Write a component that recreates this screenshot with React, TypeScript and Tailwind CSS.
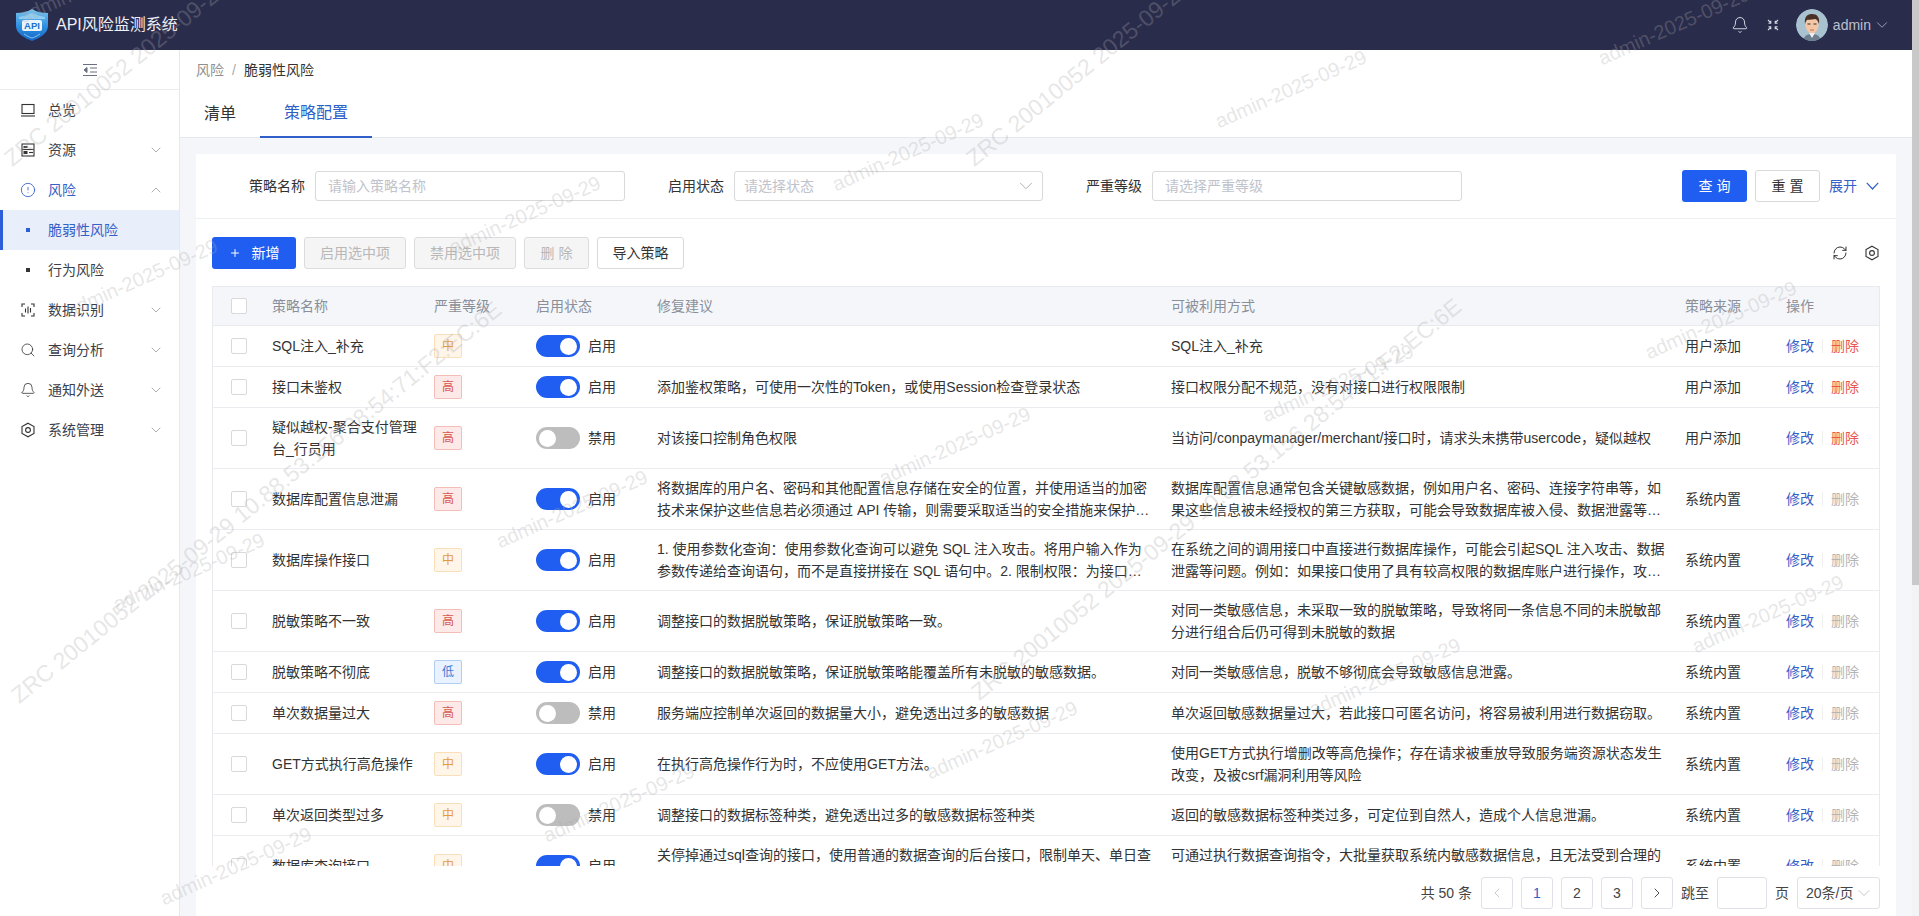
import { Bell, ChevronDown, ChevronLeft, ChevronRight, ChevronUp, CircleAlert, Plus, RefreshCw, Search } from "lucide-react";

type Level = "高" | "中" | "低";

type Rule = {
  name: string;
  level: Level;
  on: boolean;
  fix: string;
  use: string;
  source: "用户添加" | "系统内置";
};

const rules: Rule[] = [
  { name: "SQL注入_补充", level: "中", on: true, fix: "", use: "SQL注入_补充", source: "用户添加" },
  { name: "接口未鉴权", level: "高", on: true, fix: "添加鉴权策略，可使用一次性的Token，或使用Session检查登录状态", use: "接口权限分配不规范，没有对接口进行权限限制", source: "用户添加" },
  { name: "疑似越权-聚合支付管理台_行员用", level: "高", on: false, fix: "对该接口控制角色权限", use: "当访问/conpaymanager/merchant/接口时，请求头未携带usercode，疑似越权", source: "用户添加" },
  { name: "数据库配置信息泄漏", level: "高", on: true, fix: "将数据库的用户名、密码和其他配置信息存储在安全的位置，并使用适当的加密技术来保护这些信息若必须通过 API 传输，则需要采取适当的安全措施来保护数据的机密性和完整性。", use: "数据库配置信息通常包含关键敏感数据，例如用户名、密码、连接字符串等，如果这些信息被未经授权的第三方获取，可能会导致数据库被入侵、数据泄露等严重后果。", source: "系统内置" },
  { name: "数据库操作接口", level: "中", on: true, fix: "1. 使用参数化查询：使用参数化查询可以避免 SQL 注入攻击。将用户输入作为参数传递给查询语句，而不是直接拼接在 SQL 语句中。2. 限制权限：为接口分配最小权限的数据库账户。", use: "在系统之间的调用接口中直接进行数据库操作，可能会引起SQL 注入攻击、数据泄露等问题。例如：如果接口使用了具有较高权限的数据库账户进行操作，攻击者可能会借此获取更多数据。", source: "系统内置" },
  { name: "脱敏策略不一致", level: "高", on: true, fix: "调整接口的数据脱敏策略，保证脱敏策略一致。", use: "对同一类敏感信息，未采取一致的脱敏策略，导致将同一条信息不同的未脱敏部分进行组合后仍可得到未脱敏的数据", source: "系统内置" },
  { name: "脱敏策略不彻底", level: "低", on: true, fix: "调整接口的数据脱敏策略，保证脱敏策略能覆盖所有未脱敏的敏感数据。", use: "对同一类敏感信息，脱敏不够彻底会导致敏感信息泄露。", source: "系统内置" },
  { name: "单次数据量过大", level: "高", on: false, fix: "服务端应控制单次返回的数据量大小，避免透出过多的敏感数据", use: "单次返回敏感数据量过大，若此接口可匿名访问，将容易被利用进行数据窃取。", source: "系统内置" },
  { name: "GET方式执行高危操作", level: "中", on: true, fix: "在执行高危操作行为时，不应使用GET方法。", use: "使用GET方式执行增删改等高危操作；存在请求被重放导致服务端资源状态发生改变，及被csrf漏洞利用等风险", source: "系统内置" },
  { name: "单次返回类型过多", level: "中", on: false, fix: "调整接口的数据标签种类，避免透出过多的敏感数据标签种类", use: "返回的敏感数据标签种类过多，可定位到自然人，造成个人信息泄漏。", source: "系统内置" },
  { name: "数据库查询接口", level: "中", on: true, fix: "关停掉通过sql查询的接口，使用普通的数据查询的后台接口，限制单天、单日查询次数与数据量。", use: "可通过执行数据查询指令，大批量获取系统内敏感数据信息，且无法受到合理的访问控制与审计。", source: "系统内置" },
];

const levelStyle: Record<Level, string> = {
  高: "bg-[#fde9e7] border-[#f5bdb8] text-[#d9574e]",
  中: "bg-[#fff5e8] border-[#f9dfba] text-[#e79a3c]",
  低: "bg-[#e9f2fe] border-[#b0cdf3] text-[#3d7ad6]",
};

function LogoMark() {
  return (
    <svg width="32" height="32" viewBox="0 0 32 32">
      <defs>
        <linearGradient id="shield" x1="0" y1="0" x2="0" y2="1">
          <stop offset="0" stopColor="#7cc4ee" />
          <stop offset="0.55" stopColor="#2d8fe0" />
          <stop offset="1" stopColor="#1666c8" />
        </linearGradient>
      </defs>
      <path d="M16 0 C21 3 26 4 32 4 V17 C32 24 24 29 16 32 C8 29 0 24 0 17 V4 C6 4 11 3 16 0Z" fill="url(#shield)" />
      <path d="M3 8 C8 7 12 6 16 4 C20 6 24 7 29 8 V10 H3Z" fill="#a9dcf7" opacity="0.7" />
      <rect x="6" y="11" width="20" height="11" rx="2" fill="#e8f5fd" />
      <text x="16" y="20" textAnchor="middle" fontSize="9.5" fontWeight="700" fill="#1a6fd0" fontFamily="Liberation Sans, sans-serif">API</text>
      <path d="M8 25 C11 27 13 28 16 29 C19 28 21 27 24 25" stroke="#7cc4ee" fill="none" strokeWidth="1" />
    </svg>
  );
}

function Avatar() {
  return (
    <svg width="32" height="32" viewBox="0 0 32 32" className="rounded-full">
      <circle cx="16" cy="16" r="16" fill="#a8c2cf" />
      <path d="M7 32 C8 26 12 25 16 25 C20 25 24 26 25 32Z" fill="#6d7f8f" />
      <path d="M13 24 H19 L16 29Z" fill="#eef2f4" />
      <ellipse cx="16" cy="16" rx="6.5" ry="8.5" fill="#f3c7a6" />
      <path d="M9 15 C8 7 12 5 16 5 C21 5 24 8 23 15 C22 12 21 10.5 19 10 C16 11 12 10.5 11 11 C10 12 9.5 13 9 15Z" fill="#4a3128" />
      <rect x="11.5" y="14.5" width="3" height="1" fill="#3a2a24" />
      <rect x="17.5" y="14.5" width="3" height="1" fill="#3a2a24" />
      <path d="M14 21 H18" stroke="#c96a5c" strokeWidth="1" />
    </svg>
  );
}

function CollapseIcon() {
  return (
    <svg width="16" height="14" viewBox="0 0 16 14" fill="none" stroke="#6b7080" strokeWidth="1">
      <path d="M1 1.5H15M8 5H15M8 9H15M1 12.5H15" />
      <path d="M5 4.5 L2 7 L5 9.5Z" fill="#6b7080" />
    </svg>
  );
}

function MonitorIcon() {
  return (
    <svg width="16" height="16" viewBox="0 0 16 16" fill="none" stroke="#333" strokeWidth="1.1">
      <rect x="2" y="2.5" width="12" height="9" />
      <path d="M1 14H15" />
    </svg>
  );
}

function AssetIcon() {
  return (
    <svg width="16" height="16" viewBox="0 0 16 16" fill="none" stroke="#333" strokeWidth="1.1">
      <rect x="2" y="2" width="12" height="12" />
      <path d="M2 7.5H14" />
      <rect x="3.5" y="9" width="4" height="3" fill="#333" stroke="none" />
      <rect x="3.5" y="4" width="4" height="2" fill="#333" stroke="none" />
      <path d="M9 10.5H13" />
    </svg>
  );
}

function ScanIcon() {
  return (
    <svg width="16" height="16" viewBox="0 0 16 16" fill="none" stroke="#333" strokeWidth="1.1">
      <path d="M2 5V2H5M11 2H14V5M14 11V14H11M5 14H2V11" />
      <path d="M5.5 6.5V10.5M8 4.5V11.5M10.5 6V10.5" />
    </svg>
  );
}

function HexIcon({ size = 16, color = "#333" }: { size?: number; color?: string }) {
  return (
    <svg width={size} height={size} viewBox="0 0 16 16" fill="none" stroke={color} strokeWidth="1.1">
      <path d="M8 1.2 L14 4.6 V11.4 L8 14.8 L2 11.4 V4.6Z" />
      <circle cx="8" cy="8" r="2.4" />
    </svg>
  );
}

function ShrinkIcon() {
  return (
    <svg width="14" height="14" viewBox="0 0 14 14" fill="none" stroke="#d6d8e2" strokeWidth="1.1">
      <path d="M2 2L5 5M4.8 2.8V5.2H2.4M12 2L9 5M9.2 2.8V5.2H11.6M2 12L5 9M4.8 11.2V8.8H2.4M12 12L9 9M9.2 11.2V8.8H11.6" />
    </svg>
  );
}

function ExpandChevron() {
  return (
    <svg width="13" height="8" viewBox="0 0 13 8" fill="none" stroke="currentColor" strokeWidth="1.2">
      <path d="M0.8 0.8L6.5 7L12.2 0.8" />
    </svg>
  );
}

function SideItem({
  icon,
  label,
  arrow,
  active,
}: {
  icon: React.ReactNode;
  label: string;
  arrow?: "up" | "down";
  active?: boolean;
}) {
  return (
    <div className={`flex h-10 items-center pl-[20px] pr-[15px] text-sm ${active ? "text-[#3560c8]" : "text-[#3b3f4c]"}`}>
      <span className="flex w-[28px] shrink-0">{icon}</span>
      <span className="flex-1">{label}</span>
      {arrow === "down" && <ChevronDown size={16} strokeWidth={1} className="text-[#888]" />}
      {arrow === "up" && <ChevronUp size={16} strokeWidth={1} className="text-[#888]" />}
    </div>
  );
}

function SubItem({ label, active }: { label: string; active?: boolean }) {
  return (
    <div className={`flex h-10 items-center border-l-[3px] pl-[23px] text-sm ${active ? "border-[#2b5fd9] bg-[#e9eefb] text-[#3560c8]" : "border-transparent text-[#3b3f4c]"}`}>
      <span className={`mr-[18px] size-[4px] ${active ? "bg-[#2b5fd9]" : "bg-[#333]"}`} />
      {label}
    </div>
  );
}

function Sidebar() {
  return (
    <aside className="w-[180px] shrink-0 border-r border-[#e6e8ee] bg-white">
      <div className="flex h-[40px] items-center justify-center border-b border-[#ecedf1]">
        <CollapseIcon />
      </div>
      <SideItem icon={<MonitorIcon />} label="总览" />
      <SideItem icon={<AssetIcon />} label="资源" arrow="down" />
      <SideItem icon={<CircleAlert size={16} strokeWidth={1.3} />} label="风险" arrow="up" active />
      <SubItem label="脆弱性风险" active />
      <SubItem label="行为风险" />
      <SideItem icon={<ScanIcon />} label="数据识别" arrow="down" />
      <SideItem icon={<Search size={16} strokeWidth={1.2} color="#333" />} label="查询分析" arrow="down" />
      <SideItem icon={<Bell size={16} strokeWidth={1.2} color="#333" />} label="通知外送" arrow="down" />
      <SideItem icon={<HexIcon />} label="系统管理" arrow="down" />
    </aside>
  );
}

function Filters() {
  return (
    <div className="flex h-[65px] items-center border-b border-[#eeeff2] pl-[53px] pr-[17px] text-sm text-[#333]">
      <span>策略名称</span>
      <div className="ml-[10px] flex h-[30px] w-[310px] items-center rounded-[3px] border border-[#d9d9d9] pl-[12px] text-[#bfc3cc]">请输入策略名称</div>
      <span className="ml-[43px]">启用状态</span>
      <div className="ml-[10px] flex h-[30px] w-[309px] items-center justify-between rounded-[3px] border border-[#d9d9d9] pl-[9px] pr-[5px] text-[#bfc3cc]">
        请选择状态
        <ChevronDown size={22} strokeWidth={1} className="text-[#aaa]" />
      </div>
      <span className="ml-[43px]">严重等级</span>
      <div className="ml-[10px] flex h-[30px] w-[310px] items-center rounded-[3px] border border-[#d9d9d9] pl-[12px] text-[#bfc3cc]">请选择严重等级</div>
      <button className="ml-auto h-[32px] w-[65px] rounded-[3px] bg-[#1f5ef0] text-white">查 询</button>
      <button className="ml-[8px] h-[32px] w-[65px] rounded-[3px] border border-[#d9d9d9] bg-white">重 置</button>
      <span className="ml-[9px] flex items-center text-[#3560c8]">
        展开
        <span className="ml-[9px] flex">
          <ExpandChevron />
        </span>
      </span>
    </div>
  );
}

function Toolbar() {
  const off = "h-[32px] rounded-[3px] border border-[#dcdcdc] bg-[#f5f5f5] text-[#b8b8b8]";
  return (
    <div className="flex h-[67px] items-center gap-[8px] px-[16px] pt-[1px] text-sm">
      <button className="flex h-[32px] w-[84px] items-center justify-center gap-[11px] rounded-[3px] bg-[#1f5ef0] text-white">
        <Plus size={12} strokeWidth={2} />
        新增
      </button>
      <button className={`${off} w-[102px]`}>启用选中项</button>
      <button className={`${off} w-[102px]`}>禁用选中项</button>
      <button className={`${off} w-[65px]`}>删 除</button>
      <button className="h-[32px] w-[87px] rounded-[3px] border border-[#d9d9d9] bg-white text-[#333]">导入策略</button>
      <div className="ml-auto flex items-center gap-[16px] text-[#333]">
        <RefreshCw size={16} strokeWidth={1.5} />
        <HexIcon />
      </div>
    </div>
  );
}

function Checkbox() {
  return <div className="ml-[18px] size-[16px] rounded-[2px] border border-[#d9d9d9] bg-white" />;
}

function RuleRow({ rule }: { rule: Rule }) {
  const cell = "border-b border-[#ebecf0] py-[8px] pl-[12px] text-sm leading-[22px] text-[#333]";
  return (
    <tr>
      <td className="border-b border-[#ebecf0] py-[8px]">
        <Checkbox />
      </td>
      <td className={`${cell} pr-[4px]`}>{rule.name}</td>
      <td className={cell}>
        <span className={`flex h-[24px] w-[28px] items-center justify-center rounded-[2px] border text-xs ${levelStyle[rule.level]}`}>{rule.level}</span>
      </td>
      <td className={cell}>
        <div className="flex items-center gap-[8px]">
          <span className={`flex h-[22px] w-[44px] items-center rounded-full px-[3px] ${rule.on ? "justify-end bg-[#1f5ef0]" : "justify-start bg-[#bdbdbd]"}`}>
            <span className="size-[17px] rounded-full bg-white" />
          </span>
          {rule.on ? "启用" : "禁用"}
        </div>
      </td>
      <td className={`${cell} pr-[6px]`}>
        <div className="line-clamp-2">{rule.fix}</div>
      </td>
      <td className={`${cell} pr-[6px]`}>
        <div className="line-clamp-2">{rule.use}</div>
      </td>
      <td className={cell}>{rule.source}</td>
      <td className={cell}>
        <div className="flex items-center">
          <span className="text-[#3560c8]">修改</span>
          <span className="mx-[8px] h-[14px] w-px bg-[#f0f0f0]" />
          <span className={rule.source === "用户添加" ? "text-[#e8574d]" : "text-[#b5b5b5]"}>删除</span>
        </div>
      </td>
    </tr>
  );
}

function RuleTable() {
  const head = "h-[39px] border-b border-[#e8eaee] bg-[#f5f6fa] px-[12px] text-left text-sm font-normal text-[#8a8f99]";
  return (
    <div className="mx-[16px] min-h-0 flex-1 overflow-hidden border-x border-t border-[#e8eaee]">
      <table className="w-full table-fixed border-separate border-spacing-0">
        <colgroup>
          <col className="w-[47px]" />
          <col className="w-[162px]" />
          <col className="w-[102px]" />
          <col className="w-[121px]" />
          <col className="w-[514px]" />
          <col className="w-[514px]" />
          <col className="w-[101px]" />
          <col />
        </colgroup>
        <thead>
          <tr>
            <th className="h-[39px] border-b border-[#e8eaee] bg-[#f5f6fa]">
              <Checkbox />
            </th>
            <th className={head}>策略名称</th>
            <th className={head}>严重等级</th>
            <th className={head}>启用状态</th>
            <th className={head}>修复建议</th>
            <th className={head}>可被利用方式</th>
            <th className={head}>策略来源</th>
            <th className={head}>操作</th>
          </tr>
        </thead>
        <tbody>
          {rules.map((rule) => (
            <RuleRow key={rule.name} rule={rule} />
          ))}
        </tbody>
      </table>
    </div>
  );
}

function Pager() {
  const box = "flex size-[32px] items-center justify-center rounded-[3px] border border-[#dfe1e6] bg-white";
  return (
    <div className="flex h-[50px] shrink-0 items-center justify-end gap-[8px] px-[16px] pt-[4px] text-sm text-[#444]">
      <span className="mr-[1px]">共 50 条</span>
      <span className={box}>
        <ChevronLeft size={16} strokeWidth={1.2} className="text-[#bbb]" />
      </span>
      <span className={`${box} border-[#3a6aa8] text-[#3560c8]`}>1</span>
      <span className={box}>2</span>
      <span className={box}>3</span>
      <span className={box}>
        <ChevronRight size={16} strokeWidth={1.3} className="text-[#333]" />
      </span>
      <span>跳至</span>
      <span className="h-[32px] w-[50px] rounded-[3px] border border-[#dfe1e6] bg-white" />
      <span>页</span>
      <span className="flex h-[32px] w-[83px] items-center rounded-[3px] border border-[#dfe1e6] bg-white pl-[8px]">
        20条/页
        <ChevronDown size={20} strokeWidth={1} className="ml-[1px] text-[#bbb]" />
      </span>
    </div>
  );
}

function Watermarks() {
  const shortMarks: { x: number; y: number }[] = [];
  for (let m = -1; m < 3; m++) {
    for (let k = -2; k < 5; k++) {
      shortMarks.push({ x: 455 + k * 383 + m * 47, y: 259 - k * 63 + m * 294 });
    }
  }
  const longMarks = [
    { x: 16, y: 172 },
    { x: 978, y: 172 },
    { x: 23, y: 709 },
    { x: 983, y: 706 },
  ];
  return (
    <div className="pointer-events-none absolute inset-0 overflow-hidden text-[rgba(170,170,170,0.3)]">
      {shortMarks.map((p) => (
        <span
          key={`${p.x}-${p.y}`}
          className="absolute origin-bottom-left -rotate-[24deg] whitespace-nowrap text-[20px] leading-[24px]"
          style={{ left: p.x, top: p.y - 24 }}
        >
          admin-2025-09-29
        </span>
      ))}
      {longMarks.map((p) => (
        <span
          key={`${p.x}-${p.y}`}
          className="absolute origin-bottom-left -rotate-[39deg] whitespace-nowrap text-[23px] leading-[28px]"
          style={{ left: p.x, top: p.y - 28 }}
        >
          ZRC 20010052 2025-09-29 10.88.53.156 28:54:71:F2:EC:6E
        </span>
      ))}
    </div>
  );
}

export default function App() {
  return (
    <div className="relative flex h-[916px] w-full overflow-hidden bg-white [font-family:'Liberation_Sans','Noto_Sans_CJK_SC',sans-serif]">
      <div className="flex min-w-0 flex-1 flex-col">
        <header className="flex h-[50px] shrink-0 items-center bg-[#2a2c4c] pl-[16px] pr-[21px]">
          <LogoMark />
          <span className="ml-[8px] text-base text-[#eef0f6]">API风险监测系统</span>
          <div className="ml-auto flex items-center">
            <Bell size={18} strokeWidth={1.2} className="text-[#e4e6ee]" />
            <span className="ml-[17px] flex">
              <ShrinkIcon />
            </span>
            <span className="ml-[16px] flex">
              <Avatar />
            </span>
            <span className="ml-[5px] text-sm text-[#bcc0d0]">admin</span>
            <ChevronDown size={18} strokeWidth={1} className="ml-[2px] text-[#bcc0d0]" />
          </div>
        </header>
        <div className="flex min-h-0 flex-1">
          <Sidebar />
          <main className="flex min-w-0 flex-1 flex-col bg-[#f5f6fa]">
            <div className="shrink-0 border-b border-[#e6e8ee] bg-white">
              <div className="flex h-[39px] items-center gap-[8px] pl-[16px] text-sm">
                <span className="text-[#8f8f8f]">风险</span>
                <span className="text-[#aaa]">/</span>
                <span className="text-[#333]">脆弱性风险</span>
              </div>
              <div className="-mb-px flex h-[49px] items-end text-base">
                <span className="flex h-[49px] items-center px-[24px] pt-[1px] text-[#333]">清单</span>
                <span className="flex h-[49px] items-center border-b-2 border-[#2f5fc9] px-[24px] pt-[1px] text-[#2f5fc9]">策略配置</span>
              </div>
            </div>
            <div className="mx-[16px] mt-[16px] flex min-h-0 flex-1 flex-col bg-white">
              <Filters />
              <Toolbar />
              <RuleTable />
              <Pager />
            </div>
          </main>
        </div>
      </div>
      <div className="w-[7px] shrink-0 bg-[#f3f3f5]">
        <div className="h-[585px] bg-[#c9c9c9]" />
      </div>
      <Watermarks />
    </div>
  );
}
